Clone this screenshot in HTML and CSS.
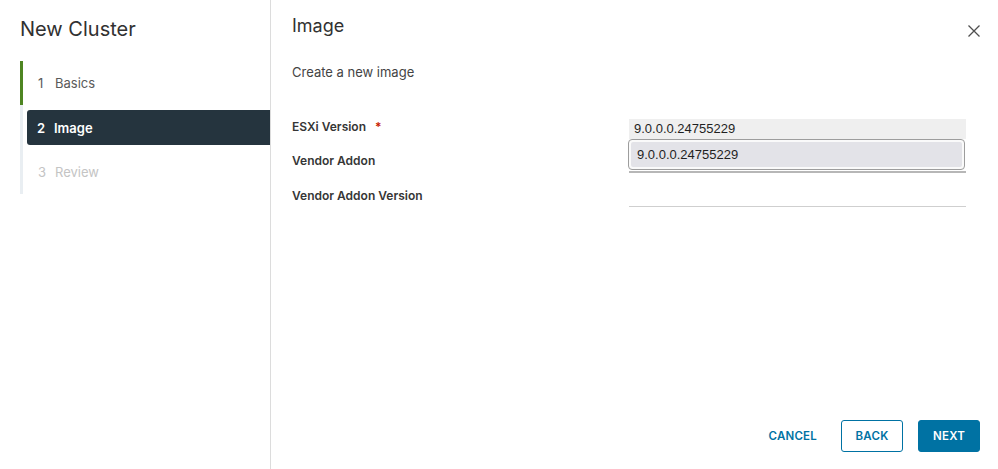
FILE: index.html
```html
<!DOCTYPE html>
<html lang="en">
<head>
<meta charset="utf-8">
<title>New Cluster</title>
<link rel="stylesheet" href="styles.css">
</head>
<body>
<div class="wizard">
  <aside class="side">
    <h1 class="side-title">New Cluster</h1>
    <nav class="steps">
      <div class="step step-done"><span class="num">1</span><span>Basics</span></div>
      <div class="step step-active"><span class="num">2</span><span>Image</span></div>
      <div class="step step-todo"><span class="num">3</span><span>Review</span></div>
    </nav>
  </aside>
  <main class="content">
    <header class="head">
      <h2 class="page-title">Image</h2>
      <button class="close" aria-label="Close">
        <svg width="16" height="16" viewBox="0 0 16 16"><path d="M2.5 2.5L13.5 13.5M13.5 2.5L2.5 13.5" stroke="#4f4f4f" stroke-width="1.3" fill="none"/></svg>
      </button>
    </header>
    <p class="desc">Create a new image</p>
    <div class="form">
      <div class="label">ESXi Version <span class="req">*</span></div>
      <div class="field field-select">
        <div class="select-band">9.0.0.0.24755229</div>
        <div class="popup"><div class="option">9.0.0.0.24755229</div></div>
      </div>
      <div class="label">Vendor Addon</div>
      <div class="field"><div class="line line-dark"></div></div>
      <div class="label">Vendor Addon Version</div>
      <div class="field"><div class="line line-light"></div></div>
    </div>
    <footer class="foot">
      <button class="btn btn-flat">CANCEL</button>
      <button class="btn btn-outline">BACK</button>
      <button class="btn btn-primary">NEXT</button>
    </footer>
  </main>
</div>
</body>
</html>
```
FILE: styles.css
```css
* { box-sizing: border-box; }
html, body { margin: 0; padding: 0; background: #fff; }
body {
  font-family: Inter, "Noto Sans", sans-serif;
  color: #333;
  width: 998px;
  height: 469px;
  overflow: hidden;
}
.wizard {
  display: flex;
  height: 469px;
}
.side {
  width: 271px;
  flex: none;
  border-right: 1px solid #dcdcdc;
  padding: 17px 0 0 20px;
}
.side-title {
  margin: 0;
  font-size: 20px;
  line-height: 24px;
  font-weight: 400;
  color: #313131;
}
.steps {
  margin-top: 20px;
  border-left: 3px solid #e9eef2;
  display: flex;
  flex-direction: column;
  gap: 5px;
}
.step {
  display: flex;
  align-items: center;
  height: 44px;
  padding-left: 15px;
  font-size: 13px;
  color: #5a5a5a;
}
.num { width: 17px; }
.step-done {
  border-left: 3px solid #4e8522;
  margin-left: -3px;
}
.step-active {
  height: 35px;
  margin-left: 4px;
  padding-left: 10px;
  background: #25343e;
  color: #fff;
  font-weight: 600;
  border-radius: 3px 0 0 3px;
}
.step-todo { color: #c4c4c4; }
.content {
  flex: 1;
  display: flex;
  flex-direction: column;
  padding: 14px 16px 17px 21px;
}
.head {
  display: flex;
  justify-content: space-between;
  align-items: flex-start;
}
.page-title {
  margin: 0;
  font-size: 18px;
  line-height: 24px;
  font-weight: 400;
  color: #313131;
}
.close {
  margin-top: 9px;
  width: 16px;
  height: 16px;
  padding: 0;
  border: 0;
  background: none;
  display: block;
}
.close svg { display: block; }
.desc {
  margin: 24px 0 0;
  font-size: 13px;
  line-height: 18px;
  color: #444;
}
.form {
  margin-top: 28px;
  display: grid;
  grid-template-columns: 337px 337px;
  grid-auto-rows: 34.5px;
}
.label {
  display: flex;
  align-items: center;
  font-size: 12px;
  font-weight: 600;
  color: #363636;
}
.req { color: #c92100; margin-left: 9px; }
.field {
  position: relative;
  display: flex;
  align-items: center;
}
.field-select { align-items: flex-start; }
.select-band {
  margin-top: 10px;
  width: 100%;
  height: 20px;
  line-height: 20px;
  padding-left: 5px;
  background: #efefef;
  font-family: "Liberation Sans", Arial, sans-serif;
  font-size: 13px;
  color: #1f1f1f;
}
.popup {
  position: absolute;
  top: 30px;
  left: -1px;
  width: 337px;
  height: 31px;
  border: 1px solid #9d9d9d;
  border-radius: 4px;
  background: #fafafa;
  padding: 2px;
  z-index: 2;
}
.option {
  height: 100%;
  background: #e3e3e8;
  border-radius: 2px;
  padding-left: 6px;
  line-height: 25px;
  font-family: "Liberation Sans", Arial, sans-serif;
  font-size: 13px;
  color: #1f1f1f;
}
.line {
  width: 100%;
  height: 24px;
}
.line-dark { border-bottom: 2px solid #b7b7b7; }
.line-light { border-bottom: 1px solid #cfcfcf; }
.foot {
  margin-top: auto;
  margin-right: 2px;
  display: flex;
  justify-content: flex-end;
  align-items: center;
}
.btn {
  height: 32px;
  min-width: 62px;
  padding: 0 12px;
  border-radius: 3px;
  font-family: Inter, "Noto Sans", sans-serif;
  font-size: 11.5px;
  font-weight: 600;
  letter-spacing: 0.2px;
  cursor: pointer;
}
.btn-flat {
  background: none;
  border: 1px solid transparent;
  color: #0072a3;
  margin-right: 11px;
}
.btn-outline {
  background: #fff;
  border: 1px solid #0072a3;
  color: #0072a3;
  margin-right: 15px;
}
.btn-primary {
  background: #0072a3;
  border: 1px solid #0072a3;
  color: #fff;
}
```
